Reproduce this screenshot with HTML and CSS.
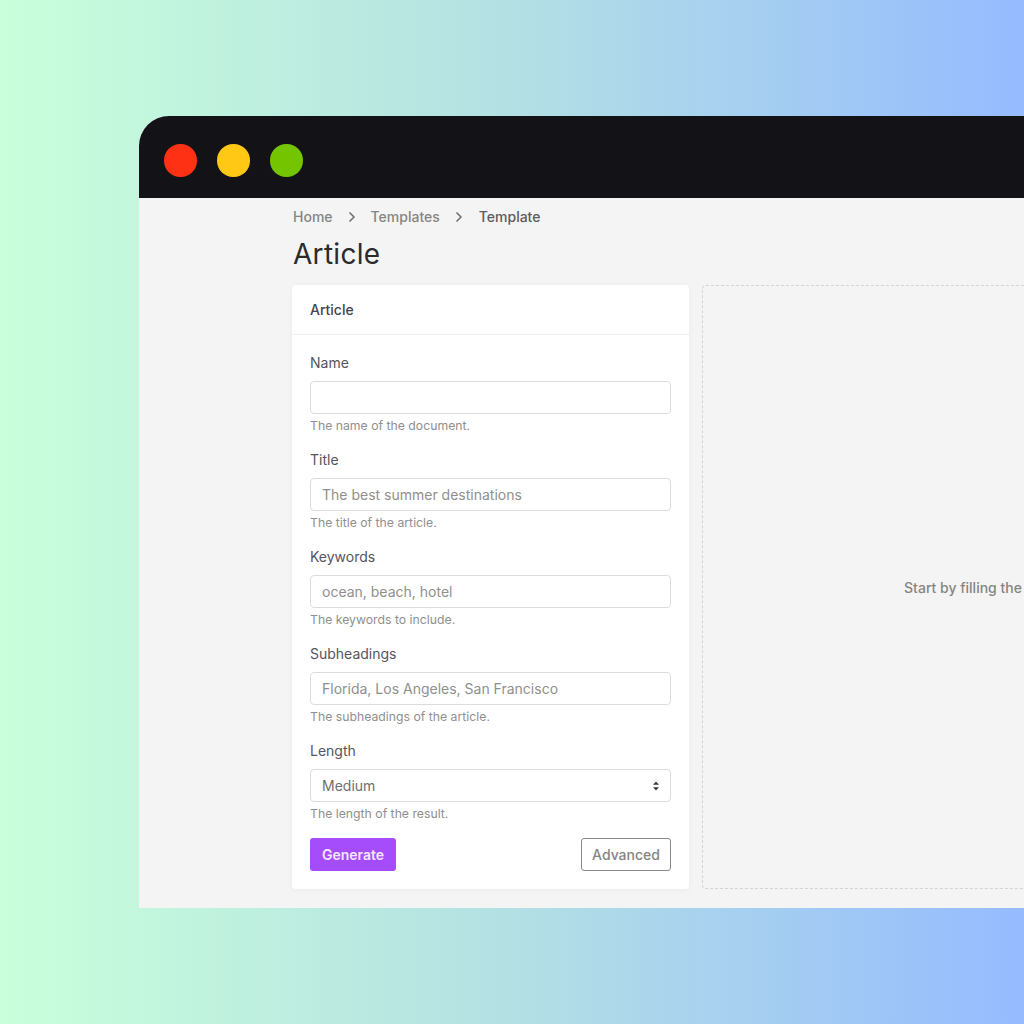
FILE: index.html
```html
<!DOCTYPE html>
<html lang="en">
<head>
<meta charset="utf-8">
<title>Article</title>
<link rel="stylesheet" href="styles.css">
</head>
<body>
<div class="window">
  <header class="titlebar">
    <span class="dot dot-red"></span>
    <span class="dot dot-yellow"></span>
    <span class="dot dot-green"></span>
  </header>
  <main class="content">
    <nav class="crumbs">
      <span>Home</span>
      <svg class="chev" viewBox="0 0 8 12"><path d="M1.5 1.5 6 6l-4.500 4.500"/></svg>
      <span>Templates</span>
      <svg class="chev" viewBox="0 0 8 12"><path d="M1.5 1.5 6 6l-4.500 4.500"/></svg>
      <span class="current">Template</span>
    </nav>
    <h1 class="title">Article</h1>
    <div class="columns">
      <section class="card">
        <div class="card-head">Article</div>
        <form class="card-body">
          <div class="field">
            <label class="label">Name</label>
            <div class="control"></div>
            <div class="help">The name of the document.</div>
          </div>
          <div class="field">
            <label class="label">Title</label>
            <div class="control placeholder">The best summer destinations</div>
            <div class="help">The title of the article.</div>
          </div>
          <div class="field">
            <label class="label">Keywords</label>
            <div class="control placeholder">ocean, beach, hotel</div>
            <div class="help">The keywords to include.</div>
          </div>
          <div class="field">
            <label class="label">Subheadings</label>
            <div class="control placeholder">Florida, Los Angeles, San Francisco</div>
            <div class="help">The subheadings of the article.</div>
          </div>
          <div class="field">
            <label class="label">Length</label>
            <div class="control select">
              <span>Medium</span>
              <svg class="updown" viewBox="0 0 8 12"><path d="M4 1.500 7 4.800H1zM4 10.500 1 7.200h6z"/></svg>
            </div>
            <div class="help">The length of the result.</div>
          </div>
          <div class="actions">
            <div class="btn btn-primary">Generate</div>
            <div class="btn btn-outline">Advanced</div>
          </div>
        </form>
      </section>
      <section class="preview">
        <span class="preview-text">Start by filling the</span>
      </section>
    </div>
  </main>
</div>
</body>
</html>
```
FILE: styles.css
```css
* { box-sizing: border-box; }
html, body { margin: 0; height: 100%; }
body {
  width: 1024px;
  height: 1024px;
  overflow: hidden;
  padding: 116px 0 0 139px;
  background: linear-gradient(90deg, #c9ffdb 0%, #b3e0e3 50%, #96bbff 100%);
  font-family: Inter, "Liberation Sans", sans-serif;
}
.window {
  width: 1100px;
  height: 792px;
  background: #f4f4f4;
  border-top-left-radius: 30px;
  overflow: hidden;
}
.titlebar {
  height: 82px;
  background: #121217;
  display: flex;
  align-items: center;
  gap: 20.500px;
  padding-left: 25px;
  padding-top: 7px;
}
.dot { width: 32.500px; height: 32.500px; border-radius: 50%; }
.dot-red { background: #ff3115; }
.dot-yellow { background: #ffc815; }
.dot-green { background: #75c400; }
.content { padding: 0 0 0 153px; }
.crumbs {
  height: 38px;
  display: flex;
  align-items: center;
  padding: 0 0 1px 1px;
  font-size: 14px;
  font-weight: 500;
  color: #858585;
}
.crumbs .chev { width: 8px; height: 12px; margin: 0 15px; fill: none; stroke: #6f6f6f; stroke-width: 1.500; }
.crumbs .current { color: #5c5c5c; margin-left: 1px; }
.title {
  margin: 0;
  height: 49px;
  padding-left: 1px;
  font-size: 28px;
  line-height: 36px;
  font-weight: 400;
  letter-spacing: 0.3px;
  color: #2b2b2b;
}
.columns { display: flex; gap: 13px; }
.card {
  flex: none;
  width: 397px;
  height: 604px;
  background: #fff;
  border-radius: 4px;
  box-shadow: 0 1px 6px rgba(0, 0, 0, 0.04);
}
.card-head {
  height: 50px;
  padding: 0 18px;
  display: flex;
  align-items: center;
  font-size: 14px;
  font-weight: 500;
  color: #44444e;
  border-bottom: 1px solid #efefef;
}
.card-body { padding: 18px 18px 0; }
.field { height: 97px; }
.label {
  display: block;
  height: 28px;
  line-height: 20px;
  font-size: 14px;
  color: #55555f;
}
.control {
  height: 33px;
  border: 1px solid #dcdcdc;
  border-radius: 4px;
  padding: 0 11px;
  display: flex;
  align-items: center;
  justify-content: space-between;
  font-size: 14px;
  color: #8f8f8f;
}
.select { color: #6f6f6f; }
.updown { width: 8px; height: 12px; margin-right: -1px; fill: #3a3a3a; }
.help {
  height: 24px;
  padding-top: 4px;
  font-size: 12.250px;
  line-height: 16px;
  color: #8f8f8f;
}
.actions {
  display: flex;
  justify-content: space-between;
}
.btn {
  height: 33px;
  border-radius: 3px;
  display: flex;
  align-items: center;
  justify-content: center;
  font-size: 14px;
  font-weight: 500;
}
.btn-primary { width: 86px; background: #a64dfb; color: #f3e8ff; font-weight: 600; }
.btn-outline { width: 90px; border: 1px solid #8a8a8a; color: #858585; }
.preview {
  flex: none;
  width: 522px;
  height: 604px;
  border: 1px dashed #d4d4d4;
  border-radius: 4px;
  display: flex;
  align-items: center;
  justify-content: center;
}
.preview-text {
  white-space: nowrap;
  font-size: 14px;
  font-weight: 500;
  color: #858585;
}
```
